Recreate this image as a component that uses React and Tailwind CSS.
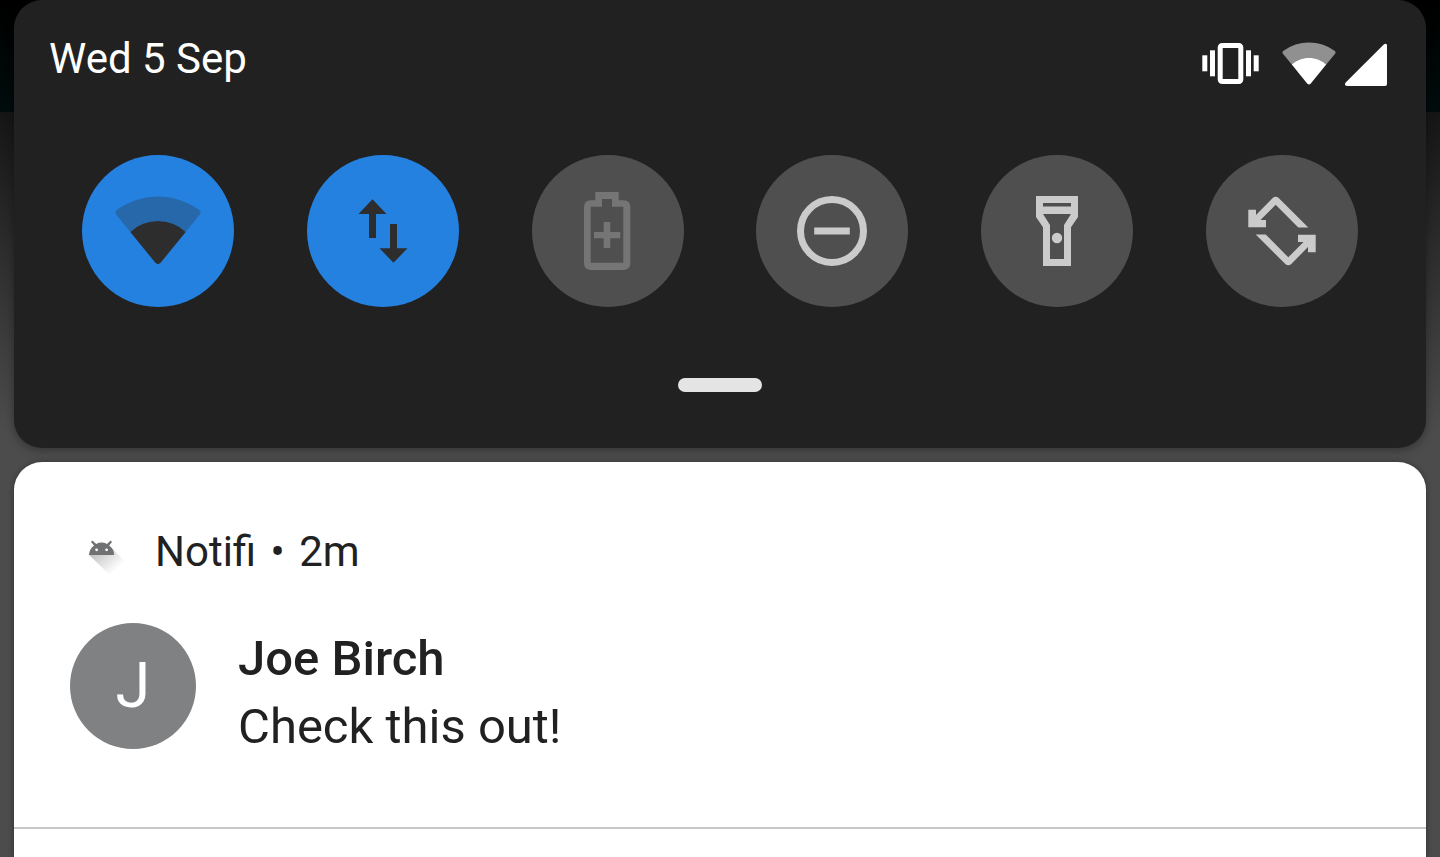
import { useState } from "react";

const WifiIcon = ({ className, arcOpacity = 0.3 }) => (
  <svg viewBox="0 0 90 90" fill="currentColor" className={className}>
    <path
      opacity={arcOpacity}
      d="M17.3 46 L2.8 28 Q1.4 25.4 4 23.8 A70 70 0 0 1 86 23.8 Q88.6 25.4 87.2 28 L72.7 46 A40.4 40.4 0 0 0 17.3 46Z"
    />
    <path d="M17.3 46 A40.4 40.4 0 0 1 72.7 46 L47.6 76.8 Q45 79.4 42.4 76.8Z" />
  </svg>
);

const VibrateIcon = ({ className }) => (
  <svg viewBox="0 0 60 56" fill="currentColor" className={className}>
    <rect x="2.3" y="19.3" width="5" height="16" />
    <rect x="10" y="14.3" width="5" height="26" />
    <rect x="20.2" y="9.5" width="20.6" height="36" rx="2" fill="none" stroke="currentColor" strokeWidth="5" />
    <rect x="46" y="14.3" width="5" height="26" />
    <rect x="53.7" y="19.3" width="5" height="16" />
  </svg>
);

const SignalIcon = ({ className }) => (
  <svg viewBox="0 0 42 56" fill="currentColor" className={className}>
    <path d="M42 9 V48 Q42 50 40 50 H2 Q-1.5 49.5 0.7 46.5 L38.5 8.7 Q41 6.6 42 9Z" />
  </svg>
);

const DataIcon = ({ className }) => (
  <svg viewBox="0 0 90 90" fill="currentColor" className={className}>
    <path d="M34.5 13.3 L48.5 28 H38 V52 H31 V28 H20.5Z" />
    <path d="M55.5 76.7 L41.5 62.3 H52 V38 H59 V62.3 H69.5Z" />
  </svg>
);

const BatteryIcon = ({ className }) => (
  <svg viewBox="0 0 90 90" fill="currentColor" className={className}>
    <path
      fillRule="evenodd"
      d="M32.3 6 H55.7 V14.3 H60.3 Q67.3 14.3 67.3 21.3 V77 Q67.3 84 60.3 84 H28 Q21 84 21 77 V21.3 Q21 14.3 28 14.3 H32.3Z M39 13 V20.7 H27.7 V76.7 H60.3 V20.7 H49 V13Z"
    />
    <path d="M40.7 36 H47.3 V46 H57.3 V52.3 H47.3 V62 H40.7 V52.3 H31 V46 H40.7Z" />
  </svg>
);

const DoNotDisturbIcon = ({ className }) => (
  <svg viewBox="0 0 90 90" fill="currentColor" className={className}>
    <circle cx="45" cy="45" r="31.5" fill="none" stroke="currentColor" strokeWidth="7" />
    <rect x="27.2" y="41.5" width="35.6" height="7" />
  </svg>
);

const FlashlightIcon = ({ className }) => (
  <svg viewBox="0 0 90 90" fill="currentColor" className={className}>
    <path
      fillRule="evenodd"
      d="M24 10 H66 V31 L59 41.3 V80 H31 V41.3 L24 31Z M31 17 V20.5 H59 V17Z M31 28 L38 39 V73 H52 V39 L59 28Z"
    />
    <circle cx="45" cy="52" r="5.2" />
  </svg>
);

const RotateIcon = ({ className }) => (
  <svg viewBox="0 0 90 90" fill="currentColor" className={className}>
    <path d="M11.3 23.7 H19 V29 L35.7 12 Q38.7 9.4 41.7 12 L71.3 41.5 H61.3 L38.7 18.7 L23.5 34 H29 V41.3 H11.3Z" />
    <path d="M78.7 66.3 H71 V61 L54.3 78 Q51.3 80.6 48.3 78 L18.7 48.5 H28.7 L51.3 71.3 L66.5 56 H61 V48.7 H78.7Z" />
  </svg>
);

const AndroidIcon = ({ className }) => (
  <svg viewBox="0 -7 42 48" className={className}>
    <defs>
      <linearGradient id="androidShadow" x1="12" y1="14" x2="31" y2="36" gradientUnits="userSpaceOnUse">
        <stop offset="0" stopColor="#000" stopOpacity="0.25" />
        <stop offset="1" stopColor="#000" stopOpacity="0" />
      </linearGradient>
    </defs>
    <path d="M5 20 L27 41 L42 28 L27.5 12.5Z" fill="url(#androidShadow)" />
    <path d="M5 20 Q5.2 14 10 10.4 L7 7 L8.4 5.4 L12.2 9 Q17.5 6.2 23 9 L26.6 5.4 L28 7 L25.2 10.4 Q30 14 30.2 20Z" fill="#707173" />
    <circle cx="12.6" cy="14.8" r="1.4" fill="#fff" />
    <circle cx="22.6" cy="14.8" r="1.4" fill="#fff" />
  </svg>
);

const initialTiles = [
  { id: "wifi", label: "Wi-Fi", Icon: WifiIcon, active: true },
  { id: "data", label: "Mobile data", Icon: DataIcon, active: true },
  { id: "battery", label: "Battery saver", Icon: BatteryIcon, active: false, disabled: true },
  { id: "dnd", label: "Do not disturb", Icon: DoNotDisturbIcon, active: false },
  { id: "flashlight", label: "Flashlight", Icon: FlashlightIcon, active: false },
  { id: "rotate", label: "Auto-rotate", Icon: RotateIcon, active: false },
];

const notifications = [
  { id: 1, app: "Notifi", time: "2m", sender: "Joe Birch", message: "Check this out!" },
];

const App = () => {
  const [tiles, setTiles] = useState(initialTiles);

  const toggleTile = (id) => {
    setTiles(tiles.map((tile) => (tile.id === id ? { ...tile, active: !tile.active } : tile)));
  };

  return (
    <div className="min-h-screen flex flex-col gap-[14px] px-[14px] font-['Roboto',sans-serif] bg-[linear-gradient(to_bottom,#000000_0px,#000c0c_112px,#151515_112px,#2b2b2b_240px,#4c4c4c_430px)]">
      {/* Quick settings */}
      <section className="bg-[#212121] rounded-[28px] pt-9 pb-14 shadow-[0_2px_10px_rgba(0,0,0,0.35)]">
        <header className="flex items-start justify-between pl-[35px] pr-[39px] text-white">
          <p className="text-[42px] leading-[46px]">Wed 5 Sep</p>
          <div className="flex items-center">
            <VibrateIcon className="w-[60px] h-14" />
            <WifiIcon className="w-14 h-14 ml-[21px]" arcOpacity={0.5} />
            <SignalIcon className="w-[42px] h-14 ml-2" />
          </div>
        </header>

        <div className="flex justify-between px-[68px] mt-[63px]">
          {tiles.map(({ id, label, Icon, active, disabled }) => (
            <button
              key={id}
              aria-label={label}
              aria-pressed={active}
              disabled={disabled}
              onClick={() => toggleTile(id)}
              className={`w-[152px] h-[152px] rounded-full flex items-center justify-center ${
                active
                  ? "bg-[#2581e0] text-[#2d2d2d]"
                  : disabled
                  ? "bg-[#4f4f4f] text-[#757575]"
                  : "bg-[#4f4f4f] text-[#cbcbcb]"
              }`}
            >
              <Icon className="w-[90px] h-[90px]" />
            </button>
          ))}
        </div>

        <button
          aria-label="Expand quick settings"
          className="block w-[84px] h-[14px] mx-auto mt-[71px] rounded-full bg-[#e4e4e4]"
        />
      </section>

      {/* Notifications */}
      <main className="flex-1 bg-white text-[#212121] rounded-t-[28px] shadow-[0_1px_6px_rgba(0,0,0,0.4)]">
        {notifications.map((notification) => (
          <article key={notification.id} className="pt-[66px] pb-[66px] border-b-2 border-[#c8c8c8]">
            <div className="flex items-center pl-[70px]">
              <AndroidIcon className="w-[42px] h-12" />
              <p className="text-[42px] leading-[48px] ml-[29px]">
                {notification.app} <span className="mx-1">•</span> {notification.time}
              </p>
            </div>
            <div className="flex items-start pl-14 gap-[42px] mt-[47px]">
              <div className="w-[126px] h-[126px] rounded-full bg-[#808183] text-white text-[63px] flex items-center justify-center">
                {notification.sender[0]}
              </div>
              <div className="text-[49px] leading-[68px] pt-0.5">
                <h2 className="font-medium">{notification.sender}</h2>
                <p>{notification.message}</p>
              </div>
            </div>
          </article>
        ))}
      </main>
    </div>
  );
};

export default App;
